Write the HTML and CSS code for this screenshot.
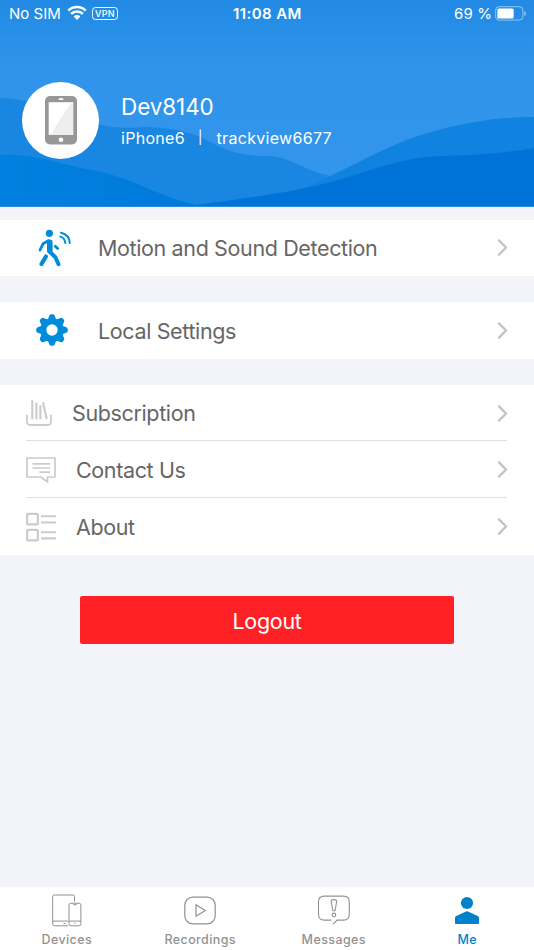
FILE: index.html
```html
<!DOCTYPE html>
<html lang="en">
<head>
<meta charset="utf-8">
<title>Me</title>
<link rel="stylesheet" href="styles.css">
</head>
<body>
<div class="app">
  <header class="hero">
    <svg class="waves" viewBox="0 0 534 207" preserveAspectRatio="none">
      <defs>
        <linearGradient id="sky" x1="0" y1="0" x2="0" y2="1"><stop offset="0" stop-color="#228ae4"/><stop offset=".12" stop-color="#268ee6"/><stop offset=".33" stop-color="#3194eb"/><stop offset="1" stop-color="#3396ec"/></linearGradient>
        <linearGradient id="left" x1="0" y1="0" x2="1" y2="0"><stop offset="0" stop-color="#0080e0"/><stop offset="1" stop-color="#007adb"/></linearGradient>
      </defs>
      <rect width="534" height="207" fill="url(#sky)"/>
      <path fill="#1987e2" d="M0 98C30 99 60 109 98 124C120 130 132 127 151 127C178 129 195 133 214 144C235 155 250 156 272 156C292 159 307 171 330 176L300 207H0Z"/>
      <path fill="#1082df" d="M290 194C340 174 380 148 421 135C463 122 500 117 534 117V207H290Z"/>
      <path fill="url(#left)" d="M0 155C36 153 60 165 97 171C135 179 162 198 197 205V207H0Z"/>
      <path fill="#0073d8" d="M197 205C240 199 270 195 300 189C350 180 390 160 427 157C465 155 495 155 534 148V207H197Z"/>
      <rect y="206" width="534" height="1" fill="#2b8be0"/>
    </svg>
    <div class="status">
      <span class="carrier">No SIM</span>
      <svg class="wifi" width="20" height="16" viewBox="0 0 20 16"><path d="M1.3 5.7A12.3 12.3 0 0 1 18.7 5.7M4.1 8.8A8.4 8.4 0 0 1 15.9 8.8" fill="none" stroke="#fff" stroke-width="2.5"/><path d="M6.6 11.5Q10 8.7 13.4 11.5L10 15Z" fill="#fff"/></svg>
      <span class="vpn">VPN</span>
      <span class="clock">11:08 AM</span>
      <span class="percent">69 %</span>
      <svg class="battery" width="32" height="15" viewBox="0 0 32 15"><rect x=".7" y=".7" width="27.2" height="13.4" rx="3.3" fill="none" stroke="#fff" stroke-opacity=".5"/><rect x="2.4" y="2.4" width="16.3" height="10" rx="1.5" fill="#fff"/><path d="M29.4 5V10Q31 9 31 7.5T29.4 5Z" fill="#fff" fill-opacity=".55"/></svg>
    </div>
    <div class="profile">
      <div class="avatar">
        <svg width="32" height="49" viewBox="0 0 32 49"><rect width="32" height="48.5" rx="5" fill="#979797"/><path fill="#fff" d="M3.7 6.2H28.2V38.8H3.7Z"/><path fill="#eee" d="M28.2 6.2V38.8H5.2L26.4 6.2Z"/><rect x="13.5" y="2.2" width="5" height="1.8" rx=".9" fill="#fff"/><circle cx="16" cy="43.7" r="2.3" fill="#fff"/></svg>
      </div>
      <div class="who">
        <div class="name">Dev8140</div>
        <div class="account"><span class="model">iPhone6</span><span class="bar">|</span><span class="user">trackview6677</span></div>
      </div>
    </div>
  </header>
  <main>
    <section class="card first">
      <div class="row wide">
        <svg class="icon walk" width="36" height="40" viewBox="0 0 36 40" fill="none" stroke="#008cda" stroke-linecap="round" stroke-linejoin="round"><circle cx="13.4" cy="5.3" r="3.6" fill="#008cda" stroke="none"/><path d="M13.8 14.2V22.6" stroke-width="5.6"/><path d="M12.2 12.8L7 15.8L4 22" stroke-width="2.8"/><path d="M13.6 23.6L19.4 29.2L22.5 36.2" stroke-width="4"/><path d="M10 28.4L5.4 36.1" stroke-width="4"/><path d="M19.3 18.2L21.7 20.6" stroke-width="2.8"/><path d="M24.3 8.6Q28.7 9.7 29.3 15M25 4.7Q33.5 6.6 33.7 15" stroke-width="2"/></svg>
        <span class="label motion">Motion and Sound Detection</span>
        <svg class="chev" viewBox="0 0 11 17"><path d="M2 1.4L9 8.5L2 15.6"/></svg>
      </div>
    </section>
    <section class="card">
      <div class="row wide">
        <svg class="icon gear" width="32" height="32" viewBox="-16 -16 32 32"><g fill="#008cda"><g id="teeth"><path id="tooth" d="M-5.6 -9.5Q-3.4 -11.3 -3 -13.6Q-2.6 -15.8 -.8 -15.8H.8Q2.6 -15.8 3 -13.6Q3.4 -11.3 5.6 -9.5V9.5Q3.4 11.3 3 13.6Q2.6 15.8 .8 15.8H-.8Q-2.6 15.8 -3 13.6Q-3.4 11.3 -5.6 9.5Z"/><use href="#tooth" transform="rotate(90)"/></g><use href="#teeth" transform="rotate(45)"/></g><circle r="5.7" fill="#fff"/></svg>
        <span class="label local">Local Settings</span>
        <svg class="chev" viewBox="0 0 11 17"><path d="M2 1.4L9 8.5L2 15.6"/></svg>
      </div>
    </section>
    <section class="card list">
      <div class="row">
        <svg class="icon books" width="26" height="28" viewBox="0 0 26 28" fill="none" stroke="#ccc" stroke-width="1.8" stroke-linecap="round"><path d="M1 16.3V22.5Q1 26 4.5 26H21.5Q25 26 25 22.5V16.3"/><path d="M6.3 2V19.5M10.4 4.5V19.5M14.4 7V19.5M17.1 4L20.6 19.3" stroke-width="2.2"/></svg>
        <span class="label subs">Subscription</span>
        <svg class="chev" viewBox="0 0 11 17"><path d="M2 1.4L9 8.5L2 15.6"/></svg>
      </div>
      <div class="row">
        <svg class="icon contact" width="30" height="28" viewBox="0 0 30 28" fill="none" stroke="#ccc" stroke-width="1.7" stroke-linejoin="round"><path d="M1 2H29V21H21.5V26L14.7 21H1Z"/><path d="M6.5 7.8H24M6.5 12H24M13.4 16.2H24"/></svg>
        <span class="label">Contact Us</span>
        <svg class="chev" viewBox="0 0 11 17"><path d="M2 1.4L9 8.5L2 15.6"/></svg>
      </div>
      <div class="row">
        <svg class="icon about-icon" width="30" height="30" viewBox="0 0 30 30" fill="none" stroke="#ccc"><g stroke-width="2.3"><rect x="1.1" y="1.8" width="10.8" height="10.6" rx="1"/><rect x="1.1" y="17.8" width="10.8" height="10.6" rx="1"/></g><path d="M15 4.3H30M15 10.5H30M15 20.2H30M15 26.4H30" stroke-width="2.1"/></svg>
        <span class="label about">About</span>
        <svg class="chev" viewBox="0 0 11 17"><path d="M2 1.4L9 8.5L2 15.6"/></svg>
      </div>
    </section>
    <button class="logout">Logout</button>
  </main>
  <nav class="tabs">
    <div class="tab">
      <svg width="30" height="34" viewBox="0 0 30 34" fill="none" stroke="#919191"><path d="M16.2 31.8H2.3Q.7 31.8.7 30.2V2.6Q.7 1 2.3 1H20.8Q22.5 1 22.5 2.6V7.5M.7 27.1H16.2M11.5 29.5H13.5"/><rect x="17" y="9.2" width="11.9" height="22.6" rx="2"/><path d="M21 9.8Q21.3 10.8 23 10.8T25 9.8M17 27.1H29M22.3 29.3H23.6"/></svg>
      <span class="t1">Devices</span>
    </div>
    <div class="tab">
      <svg width="34" height="34" viewBox="0 0 34 34" fill="none" stroke="#919191" stroke-width="1.2" stroke-linejoin="round"><rect x="1.8" y="3.2" width="30.4" height="26.6" rx="8"/><path d="M13 10.7L22.3 16.5L13 22.3Z"/></svg>
      <span class="t2">Recordings</span>
    </div>
    <div class="tab">
      <svg width="34" height="34" viewBox="0 0 34 34" fill="none" stroke="#919191" stroke-width="1.1" stroke-linecap="round"><path d="M14 26.1H7.4Q1.5 26.1 1.5 20.2V8Q1.5 2.1 7.4 2.1H26.4Q32.3 2.1 32.3 8V20.2Q32.3 26.1 26.4 26.1H20.2L16.3 29.8"/><path d="M14.2 7.3Q14.2 5.6 16.9 5.6T19.7 7.3L18.2 16.1Q16.9 17.8 15.7 16.1Z"/><circle cx="16.9" cy="20.9" r="1.8"/></svg>
      <span class="t3">Messages</span>
    </div>
    <div class="tab active">
      <svg width="26" height="34" viewBox="0 0 26 34" fill="#0082ca"><circle cx="13" cy="9" r="6.1"/><path d="M1 24Q1 22.7 2.2 22.1L12 17.5Q13 17.1 14 17.5L23.8 22.1Q25 22.7 25 24V29.2Q25 30 24.2 30H1.8Q1 30 1 29.2Z"/></svg>
      <span class="t4">Me</span>
    </div>
  </nav>
</div>
</body>
</html>
```
FILE: styles.css
```css
* { box-sizing: border-box; }
body { margin: 0; font-family: Inter, "Liberation Sans", sans-serif; background: #f3f4f9; }
svg { display: block; flex: none; }
.app { width: 534px; height: 950px; display: flex; flex-direction: column; overflow: hidden; background: #f3f4f9; }
.hero { position: relative; height: 207px; flex: none; color: #fff; }
.waves { position: absolute; inset: 0; width: 534px; height: 207px; }
.status { position: relative; height: 28px; display: flex; align-items: center; padding: 0 7px 0 9px; font-size: 15px; line-height: 28px; white-space: nowrap; }
.carrier { width: 58px; }
.wifi { margin-top: -3px; }
.vpn { margin: -1px 0 0 5px; width: 26px; height: 13px; border: 1px solid #fff; border-radius: 3.5px; font-size: 9px; line-height: 11px; text-align: center; letter-spacing: .4px; font-weight: 500; }
.clock { margin-left: 115px; font-weight: 600; letter-spacing: .4px; width: 80px; }
.percent { margin-left: auto; letter-spacing: .1px; }
.battery { margin: -2px 0 0 3px; }
.profile { position: relative; display: flex; padding: 53px 0 0 22px; }
.avatar { width: 77px; height: 77px; margin-top: 1px; border-radius: 50%; background: #fff; display: flex; align-items: center; justify-content: center; }
.who { margin-left: 22px; padding-top: 10px; white-space: nowrap; }
.name { font-size: 22.5px; line-height: 32px; font-weight: 400; letter-spacing: -.1px; }
.account { display: flex; font-size: 16px; line-height: 30px; letter-spacing: .3px; }
.bar { margin-left: 13px; font-size: 13px; line-height: 29px; }
.user { margin-left: 14px; }
main { flex: 1; padding-top: 12.5px; }
.card { background: #fff; margin-bottom: 26px; padding: 0 27px 0 26px; }
.row { height: 56.7px; display: flex; align-items: center; position: relative; }
.list .row + .row { height: 56.9px; border-top: 1px solid #e0e0e2; padding-top: 1px; }
.list .row:first-child { height: 55.6px; padding-top: 1px; }
.list { padding-bottom: .7px; }
.label { color: #666; font-size: 21.5px; line-height: 30px; margin-left: 20px; letter-spacing: -.37px; white-space: nowrap; }
.walk { margin-left: 10px; }
.motion { margin-left: 26px; }
.gear { margin: -1px 0 0 10px; }
.local { margin-left: 30px; }
.chev { width: 11px; height: 17px; margin: 0 -1px 0 auto; fill: none; stroke: #c3c3c5; stroke-width: 2.3; stroke-linecap: round; }
.logout { display: block; width: 374px; height: 48px; margin: 41px auto 0; border: 0; border-radius: 2px; background: #ff2126; color: #fff; font: 400 21.5px/50px Inter, "Liberation Sans", sans-serif; letter-spacing: -.3px; padding: 0; }
.tabs { height: 63.5px; flex: none; background: #fff; display: grid; grid-template-columns: repeat(4, 1fr); }
.tab { display: flex; flex-direction: column; align-items: center; padding-top: 7.5px; color: #929292; font-size: 12.5px; line-height: 18px; font-weight: 500; }
.tab span { margin-top: 3px; letter-spacing: .4px; }
.active { color: #0082ca; }
```
